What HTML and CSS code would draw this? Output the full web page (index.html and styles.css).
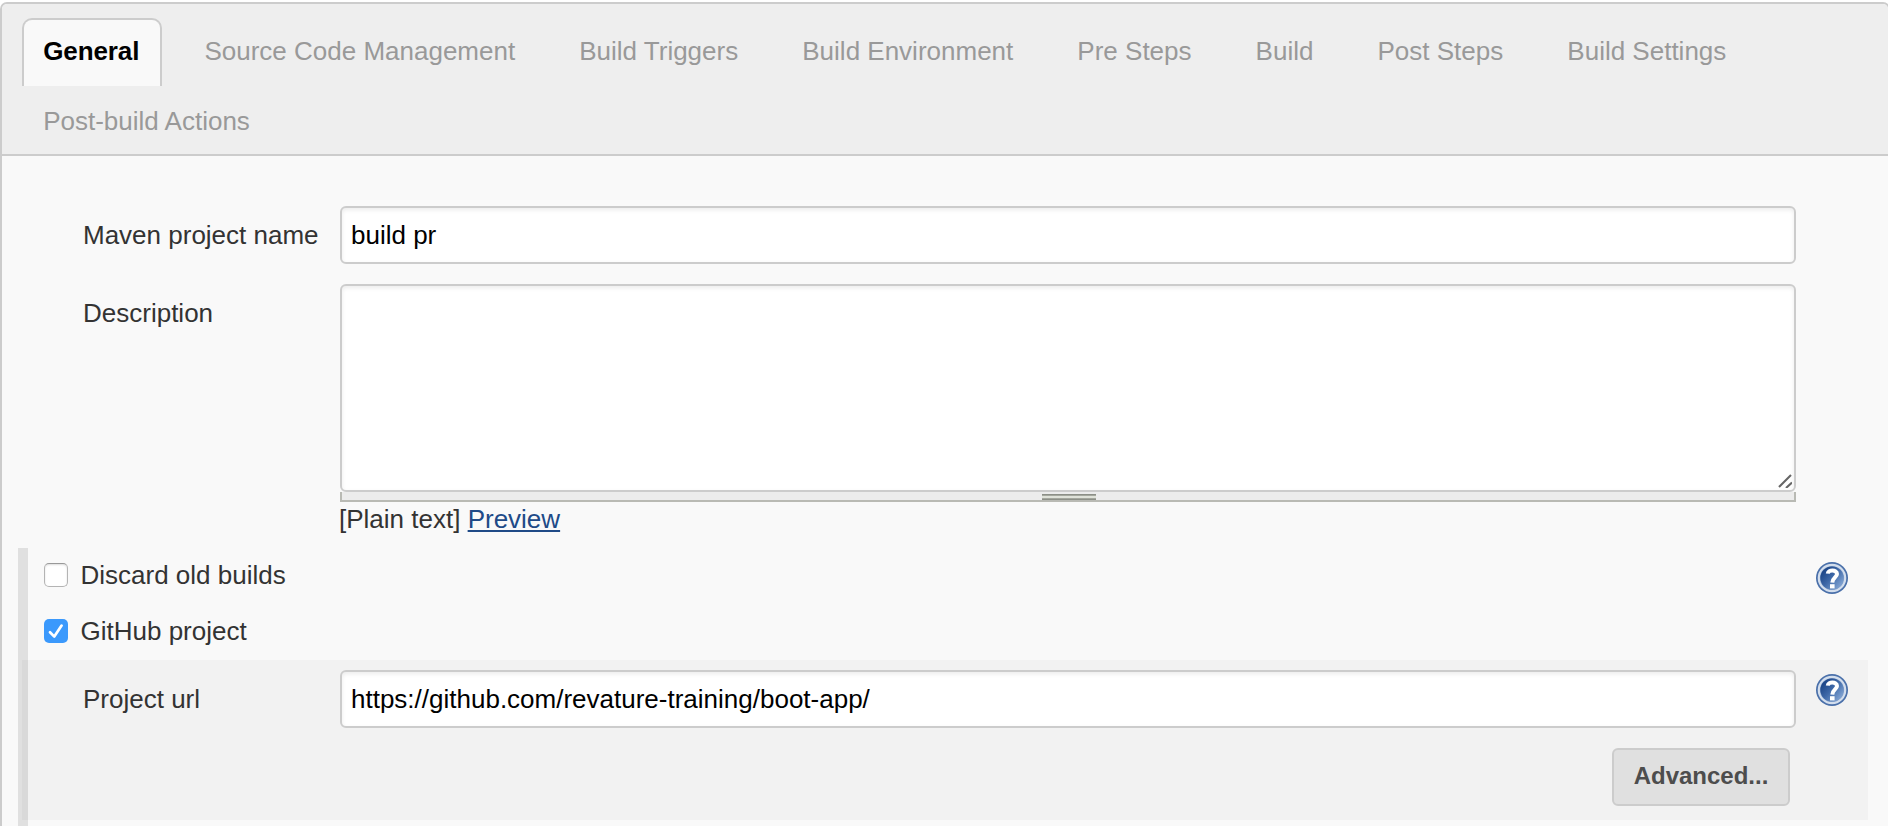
FILE: index.html
```
<!DOCTYPE html>
<html lang="en">
<head>
<meta charset="utf-8">
<title>General - Configure</title>
<link rel="stylesheet" href="styles.css">
</head>
<body>
<svg class="defs" width="0" height="0" aria-hidden="true">
  <defs>
    <linearGradient id="help-fill" x1="0.1" y1="0.2" x2="0.9" y2="0.9">
      <stop offset="0" stop-color="#1c4587"/>
      <stop offset="0.45" stop-color="#3f69a8"/>
      <stop offset="1" stop-color="#86a8d6"/>
    </linearGradient>
    <symbol id="help" viewBox="0 0 32 32">
      <circle cx="16" cy="16" r="16" fill="#4a70aa"/>
      <circle cx="16" cy="16" r="13.2" fill="#7f9cc7" stroke="#d3deed" stroke-width="2.2"/>
      <circle cx="16" cy="16" r="11.6" fill="url(#help-fill)"/>
      <path d="M11.8 11.6C12 7.6 21 7.2 21 12C21 15.4 16.4 15.6 16.3 20.6" fill="none" stroke="#fff" stroke-width="4"/>
      <path d="M14 22.2h4.6v4.2h-4.6z" fill="#fff"/>
    </symbol>
  </defs>
</svg>
<main class="config">
  <nav class="tabs">
    <a class="tab active">General</a>
    <a class="tab">Source Code Management</a>
    <a class="tab">Build Triggers</a>
    <a class="tab">Build Environment</a>
    <a class="tab">Pre Steps</a>
    <a class="tab">Build</a>
    <a class="tab">Post Steps</a>
    <a class="tab">Build Settings</a>
    <a class="tab">Post-build Actions</a>
  </nav>
  <form class="form">
    <div class="row">
      <label class="label">Maven project name</label>
      <div class="field">build pr</div>
    </div>
    <div class="row description">
      <label class="label">Description</label>
      <div class="editor">
        <div class="field area">
          <svg class="grip" width="14" height="14" viewBox="0 0 14 14"><path d="M1 13L13 1M8 14L14 8.5" fill="none" stroke="#666" stroke-width="2.1"/></svg>
        </div>
        <div class="resize"><span class="handle"></span></div>
        <div class="hint">[Plain text] <a class="link">Preview</a></div>
      </div>
    </div>
    <section class="options">
      <div class="option">
        <span class="check"></span><span>Discard old builds</span>
        <svg class="help" width="32" height="32"><use href="#help"/></svg>
      </div>
      <div class="option second">
        <span class="check checked"><svg width="24" height="24" viewBox="0 0 24 24"><path d="M6 13.2L10.3 17.6L17.6 6.6" fill="none" stroke="#fff" stroke-width="2.7" stroke-linecap="round" stroke-linejoin="round"/></svg></span><span>GitHub project</span>
      </div>
      <div class="nested">
        <div class="row url">
          <label class="label">Project url</label>
          <div class="field">https://github.com/revature-training/boot-app/</div>
          <svg class="help" width="32" height="32"><use href="#help"/></svg>
        </div>
        <button class="advanced" type="button">Advanced...</button>
      </div>
    </section>
  </form>
</main>
</body>
</html>
```
FILE: styles.css
```
* {
  box-sizing: border-box;
}

body {
  margin: 0;
  padding-top: 2px;
  height: 826px;
  overflow: hidden;
  background: #fff;
  color: #333;
  font: 26px/30px "Liberation Sans", Arial, sans-serif;
}

.defs {
  position: absolute;
}

.config {
  width: 1890px;
  height: 840px;
  overflow: hidden;
  border: 2px solid #ccc;
  border-radius: 7px 7px 0 0;
  background: #f9f9f9;
}

.tabs {
  display: flex;
  flex-wrap: wrap;
  align-content: flex-start;
  gap: 2px 20px;
  height: 152px;
  padding: 14px 20px 0;
  background: #eee;
  border-bottom: 2px solid #ccc;
}

.tab {
  height: 68px;
  padding: 16px 20.9px 0 19.2px;
  border: 2px solid transparent;
  border-bottom: 0;
  border-radius: 10px 10px 0 0;
  color: #999;
  white-space: nowrap;
}

.tab.active {
  margin-right: 1px;
  background: #f9f9f9;
  border-color: #ccc;
  color: #000;
  font-weight: bold;
  letter-spacing: -0.1px;
}

.form {
  padding: 50px 0 0 16px;
}

.row {
  display: grid;
  grid-template-columns: 257px 1456px 32px;
  column-gap: 0;
  padding-left: 65px;
}

.label {
  padding-top: 14px;
}

.field {
  height: 58px;
  padding: 12px 9px 0;
  border: 2px solid #ccc;
  border-radius: 6px;
  background: #fff;
  box-shadow: inset 0 2px 4px #ececec;
  color: #000;
}

.description {
  margin-top: 20px;
}

.area {
  display: flex;
  justify-content: flex-end;
  align-items: flex-end;
  height: 208px;
  padding: 0 2px 2px;
}

.resize {
  display: flex;
  justify-content: center;
  height: 10px;
  padding-top: 2px;
  border: solid #b9bab4;
  border-width: 0 2px 2px;
  background: #ececec;
}

.handle {
  width: 54px;
  height: 6px;
  margin-left: 2px;
  background: linear-gradient(#8c8f87 0 1px, #a4a79e 1px 2px, #dfe2d9 2px 4px, #a4a79e 4px 5px, #8c8f87 5px);
}

.hint {
  height: 46px;
  padding-top: 2px;
  margin-left: -1px;
}

.link {
  color: #204a87;
  text-decoration: underline;
  text-decoration-thickness: 2px;
  text-underline-offset: 2px;
}

.options {
  height: 290px;
  border-left: 10px solid #e0e0e0;
}

.option {
  display: flex;
  gap: 12.5px;
  height: 56px;
  padding: 12px 40px 0 16px;
}

.option .help {
  margin: 2px 0 0 auto;
}

.check {
  width: 24px;
  height: 24px;
  margin-top: 3px;
  border: 1px solid #b4b4b4;
  border-top-color: #999;
  border-radius: 5px;
  background: #fff;
  box-shadow: inset 0 1px 2px #ddd;
}

.check.checked {
  border: 0;
  background: #3b99fc;
  box-shadow: none;
}

.nested {
  height: 160px;
  width: 1846px;
  margin-left: -6px;
  padding-top: 10px;
  background: rgba(0, 0, 0, 0.028);
}

.url {
  padding-left: 61px;
  column-gap: 20px;
  grid-template-columns: 237px 1456px 32px;
}

.url .help {
  margin-top: 4px;
}

.advanced {
  display: block;
  width: 178px;
  height: 58px;
  margin: 20px 0 0 1590px;
  padding: 0 0 3px;
  border: 2px solid #ccc;
  border-radius: 6px;
  background: #e0e0e0;
  color: #4d4d4d;
  font: bold 24px/28px "Liberation Sans", Arial, sans-serif;
}
```
